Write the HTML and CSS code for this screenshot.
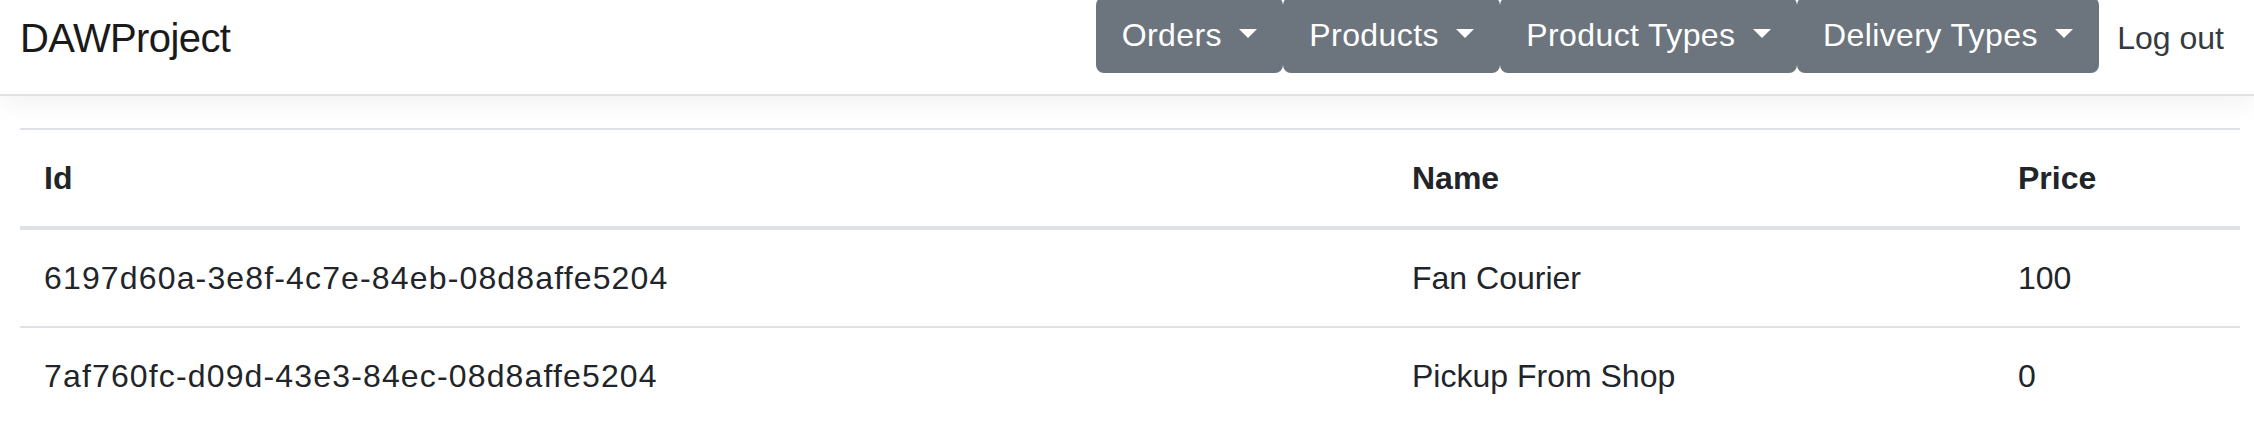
FILE: index.html
```html
<!DOCTYPE html>
<html lang="en">
<head>
<meta charset="utf-8">
<title>DAWProject</title>
<link rel="stylesheet" href="styles.css">
</head>
<body>
<header class="navbar">
  <a class="brand" href="#">DAWProject</a>
  <nav class="nav">
    <div class="btn-group">
      <button class="btn dropdown-toggle">Orders </button>
      <button class="btn dropdown-toggle">Products </button>
      <button class="btn dropdown-toggle">Product Types </button>
      <button class="btn dropdown-toggle">Delivery Types </button>
    </div>
    <a class="nav-link" href="#">Log out</a>
  </nav>
</header>
<main class="content">
  <table class="table">
    <colgroup>
      <col class="col-id">
      <col class="col-name">
      <col class="col-price">
    </colgroup>
    <thead>
      <tr><th>Id</th><th>Name</th><th>Price</th></tr>
    </thead>
    <tbody>
      <tr><td class="uuid">6197d60a-3e8f-4c7e-84eb-08d8affe5204</td><td>Fan Courier</td><td>100</td></tr>
      <tr><td class="uuid">7af760fc-d09d-43e3-84ec-08d8affe5204</td><td>Pickup From Shop</td><td>0</td></tr>
    </tbody>
  </table>
</main>
</body>
</html>
```
FILE: styles.css
```css
* { box-sizing: border-box; }

html, body {
  margin: 0;
  padding: 0;
  background: #fff;
}

body {
  font-family: "Liberation Sans", Arial, sans-serif;
  font-size: 32px;
  line-height: 48px;
  color: #212529;
  overflow: hidden;
}

.navbar {
  display: flex;
  align-items: flex-start;
  height: 96px;
  padding: 0 14px 0 20px;
  border-bottom: 2px solid #dee2e6;
  box-shadow: 0 8px 24px rgba(0, 0, 0, 0.05);
  background: #fff;
  position: relative;
  z-index: 1;
}

.brand {
  font-size: 40px;
  line-height: 60px;
  padding-top: 8px;
  letter-spacing: -0.6px;
  color: #1a1a1a;
  text-decoration: none;
  white-space: nowrap;
}

.nav {
  margin-left: auto;
  display: flex;
  align-items: flex-start;
}

.btn-group {
  display: flex;
  margin-top: -3px;
}

.btn {
  font-family: inherit;
  font-size: 32px;
  line-height: 48px;
  letter-spacing: 0.4px;
  padding: 12px 24px;
  border: 2px solid #6c757d;
  border-radius: 8px;
  background: #6c757d;
  color: #fff;
  white-space: pre;
  cursor: pointer;
  margin: 0;
}

.dropdown-toggle::after {
  content: "";
  display: inline-block;
  margin-left: 0.255em;
  vertical-align: 0.255em;
  border-top: 0.3em solid;
  border-right: 0.3em solid transparent;
  border-left: 0.3em solid transparent;
  border-bottom: 0;
}

.nav-link {
  padding: 14px 16px 0 18px;
  line-height: 48px;
  color: #343a40;
  text-decoration: none;
  white-space: nowrap;
}

.content {
  padding: 32px 14px 0 20px;
}

.table {
  width: 100%;
  border-collapse: collapse;
  color: #212529;
}

.col-id { width: 1368px; }
.col-name { width: 606px; }
.col-price { width: 246px; }

.table th,
.table td {
  padding: 24px;
  text-align: left;
  vertical-align: top;
  border-top: 2px solid #dee2e6;
  white-space: nowrap;
}

.table th {
  font-weight: bold;
  border-bottom: 4px solid #dee2e6;
}

.table thead + tbody tr:first-child td {
  border-top: 0;
}

.uuid {
  letter-spacing: 1.15px;
}
```
